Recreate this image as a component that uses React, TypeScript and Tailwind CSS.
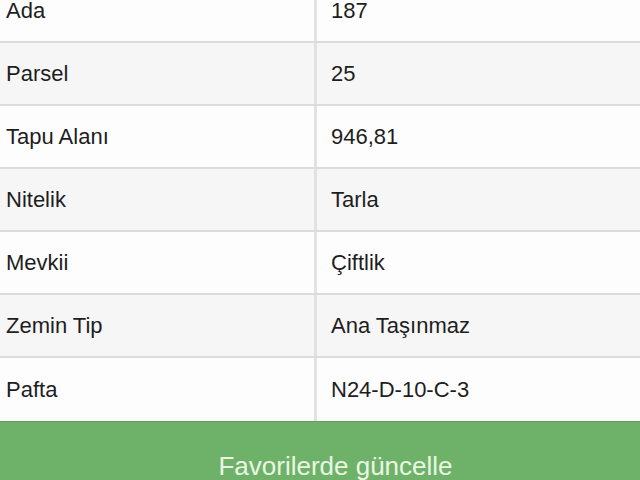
import React from 'react';

type Row = { label: string; value: string };

const rows: Row[] = [
  { label: 'Ada', value: '187' },
  { label: 'Parsel', value: '25' },
  { label: 'Tapu Alanı', value: '946,81' },
  { label: 'Nitelik', value: 'Tarla' },
  { label: 'Mevkii', value: 'Çiftlik' },
  { label: 'Zemin Tip', value: 'Ana Taşınmaz' },
  { label: 'Pafta', value: 'N24-D-10-C-3' },
];

const App: React.FC = () => {
  return (
    <div
      className="w-[640px] h-[480px] overflow-hidden bg-white flex flex-col"
      style={{ fontFamily: '"Liberation Sans", Arial, sans-serif' }}
    >
      <div className="flex flex-col -mt-[20px]">
        {rows.map((row, i) => (
          <div
            key={row.label}
            className={`flex h-[63px] text-[22px] text-[#1e1e1e] ${
              i === rows.length - 1 ? 'h-[61px]' : 'border-b-2 border-[#dcdcdc]'
            } ${i % 2 === 0 ? 'bg-[#fdfdfd]' : 'bg-[#f6f6f6]'}`}
          >
            <div className="w-[317px] shrink-0 flex items-center pl-[6px] border-r-[3px] border-[#e2e2e2]">
              {row.label}
            </div>
            <div className="flex-1 flex items-center pl-[14px]">{row.value}</div>
          </div>
        ))}
      </div>
      <button className="w-full bg-[#6eb26a] border-t border-[#5f9f5b] pt-[29px] pb-[32px] pl-[31px] text-[26px] leading-[30px] text-[#eaf6e2] text-center shrink-0">
        Favorilerde güncelle
      </button>
    </div>
  );
};

export default App;
